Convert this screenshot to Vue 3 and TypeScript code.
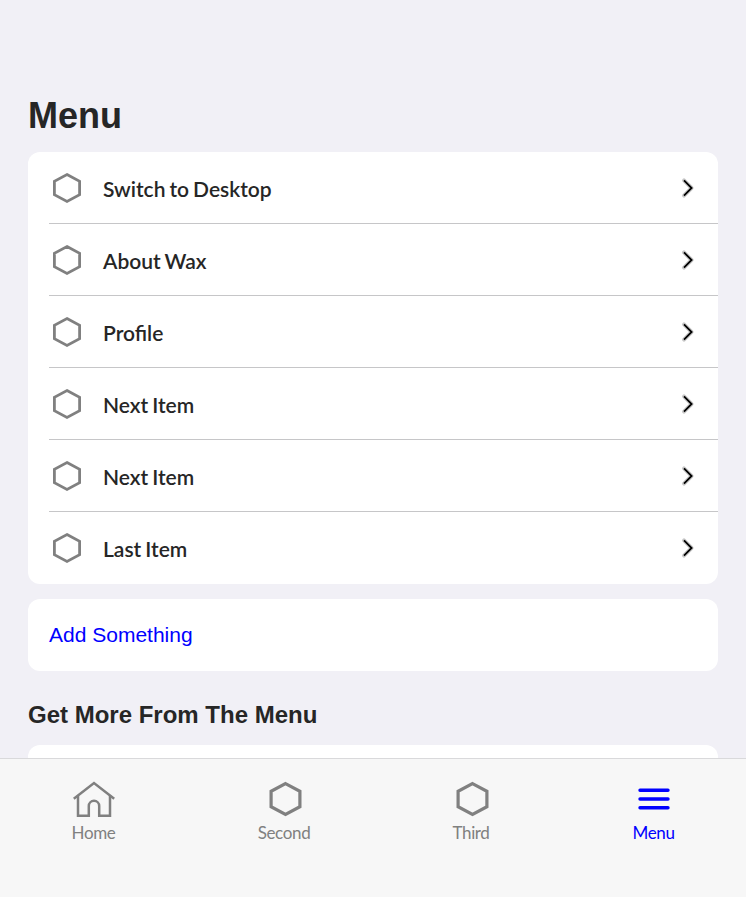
<script setup lang="ts">
interface MenuItem {
  id: number
  label: string
}

interface Tab {
  label: string
  icon: 'home' | 'hexagon' | 'bars'
  active: boolean
}

const items: MenuItem[] = [
  'Switch to Desktop',
  'About Wax',
  'Profile',
  'Next Item',
  'Next Item',
  'Last Item',
].map((label, id) => ({ id, label }))

const tabs: Tab[] = [
  { label: 'Home', icon: 'home', active: false },
  { label: 'Second', icon: 'hexagon', active: false },
  { label: 'Third', icon: 'hexagon', active: false },
  { label: 'Menu', icon: 'bars', active: true },
]
</script>

<template>
  <div class="screen">
    <main class="content">
      <h1 class="title">Menu</h1>
      <ul class="card list">
        <li v-for="item in items" :key="item.id" class="row">
          <svg class="row-icon" width="36" height="36" viewBox="0 0 36 36">
            <path d="M18 4.6 30.6 11.3V24.7L18 31.4 5.4 24.7V11.3Z" fill="none" stroke="#808080" stroke-width="2.8" />
          </svg>
          <span class="row-label">{{ item.label }}</span>
          <svg class="chevron" width="16" height="24" viewBox="0 0 16 24">
            <path d="M4 4.4 11.6 12 4 19.6" fill="none" stroke="#c8c8c8" stroke-width="4" stroke-linecap="round" stroke-linejoin="round" />
            <path d="M4 4.4 11.6 12 4 19.6" fill="none" stroke="#000" stroke-width="1.8" />
          </svg>
        </li>
      </ul>
      <div class="card action"><a class="action-link">Add Something</a></div>
      <h2 class="subtitle">Get More From The Menu</h2>
      <div class="card more"></div>
    </main>
    <nav class="tabs">
      <a v-for="tab in tabs" :key="tab.label" class="tab" :class="{ active: tab.active }">
        <svg class="tab-icon" width="44" height="40" viewBox="0 0 44 40" fill="none" stroke="currentColor">
          <path v-if="tab.icon === 'hexagon'" d="M22.5 4.6 36.9 12.3V27.7L22.5 35.4 8.1 27.7V12.3Z" stroke-width="3.2" />
          <g v-else-if="tab.icon === 'home'" stroke-width="2.5">
            <path d="M1.8 19.8 22 4.1 42.2 19.8" />
            <path d="M6 17V36.8H16.8V27A5.2 5.2 0 0 1 27.2 27V36.8H38V17" />
          </g>
          <path v-else d="M8 11.2H36M8 20H36M8 28.8H36" stroke-width="3.4" stroke-linecap="round" />
        </svg>
        <span class="tab-label">{{ tab.label }}</span>
      </a>
    </nav>
  </div>
</template>

<style>
body {
  margin: 0;
  overflow: hidden;
}
</style>

<style scoped>
.screen {
  box-sizing: border-box;
  display: flex;
  flex-direction: column;
  height: 100vh;
  overflow: hidden;
  background: #f1f0f6;
  color: #262626;
  font-family: "Liberation Sans", Arial, sans-serif;
}
.content {
  flex: 1;
  min-height: 0;
  overflow: hidden;
  padding: 95px 28px 0;
}
.title {
  margin: 0 0 15px;
  font-size: 36px;
  line-height: 42px;
  font-weight: 700;
}
.card {
  background: #fff;
  border-radius: 12px;
}
.list {
  margin: 0;
  padding: 0 0 0 21px;
  list-style: none;
}
.row {
  box-sizing: border-box;
  display: flex;
  align-items: center;
  height: 72px;
  padding-right: 22px;
  border-bottom: 1px solid #c6c6c8;
}
.row:last-child {
  border-bottom-color: transparent;
}
.row-label {
  flex: 1;
  margin-left: 18px;
  padding-top: 3px;
  font-family: Lato, sans-serif;
  font-size: 21px;
  line-height: 26px;
  font-weight: 600;
  word-spacing: -1.2px;
}
.action {
  display: flex;
  align-items: center;
  height: 72px;
  margin-top: 15px;
  padding-left: 21px;
}
.action-link {
  color: #00f;
  font-size: 21px;
  line-height: 24px;
}
.subtitle {
  margin: 30px 0 16px;
  font-size: 24px;
  line-height: 28px;
  font-weight: 700;
}
.more {
  height: 72px;
}
.tabs {
  box-sizing: border-box;
  display: grid;
  grid-template-columns: 188fr 193fr 181fr 184fr;
  height: 139px;
  padding-top: 20px;
  border-top: 1px solid #d9d9db;
  background: #f7f7f7;
}
.tab {
  display: flex;
  flex-direction: column;
  align-items: center;
  color: #808080;
}
.tab-icon {
  display: block;
}
.tab-label {
  margin-top: 3px;
  padding-right: 1px;
  font-family: Lato, sans-serif;
  font-size: 17px;
  line-height: 22px;
  letter-spacing: -0.35px;
}
.tab.active {
  color: #00f;
}
</style>
